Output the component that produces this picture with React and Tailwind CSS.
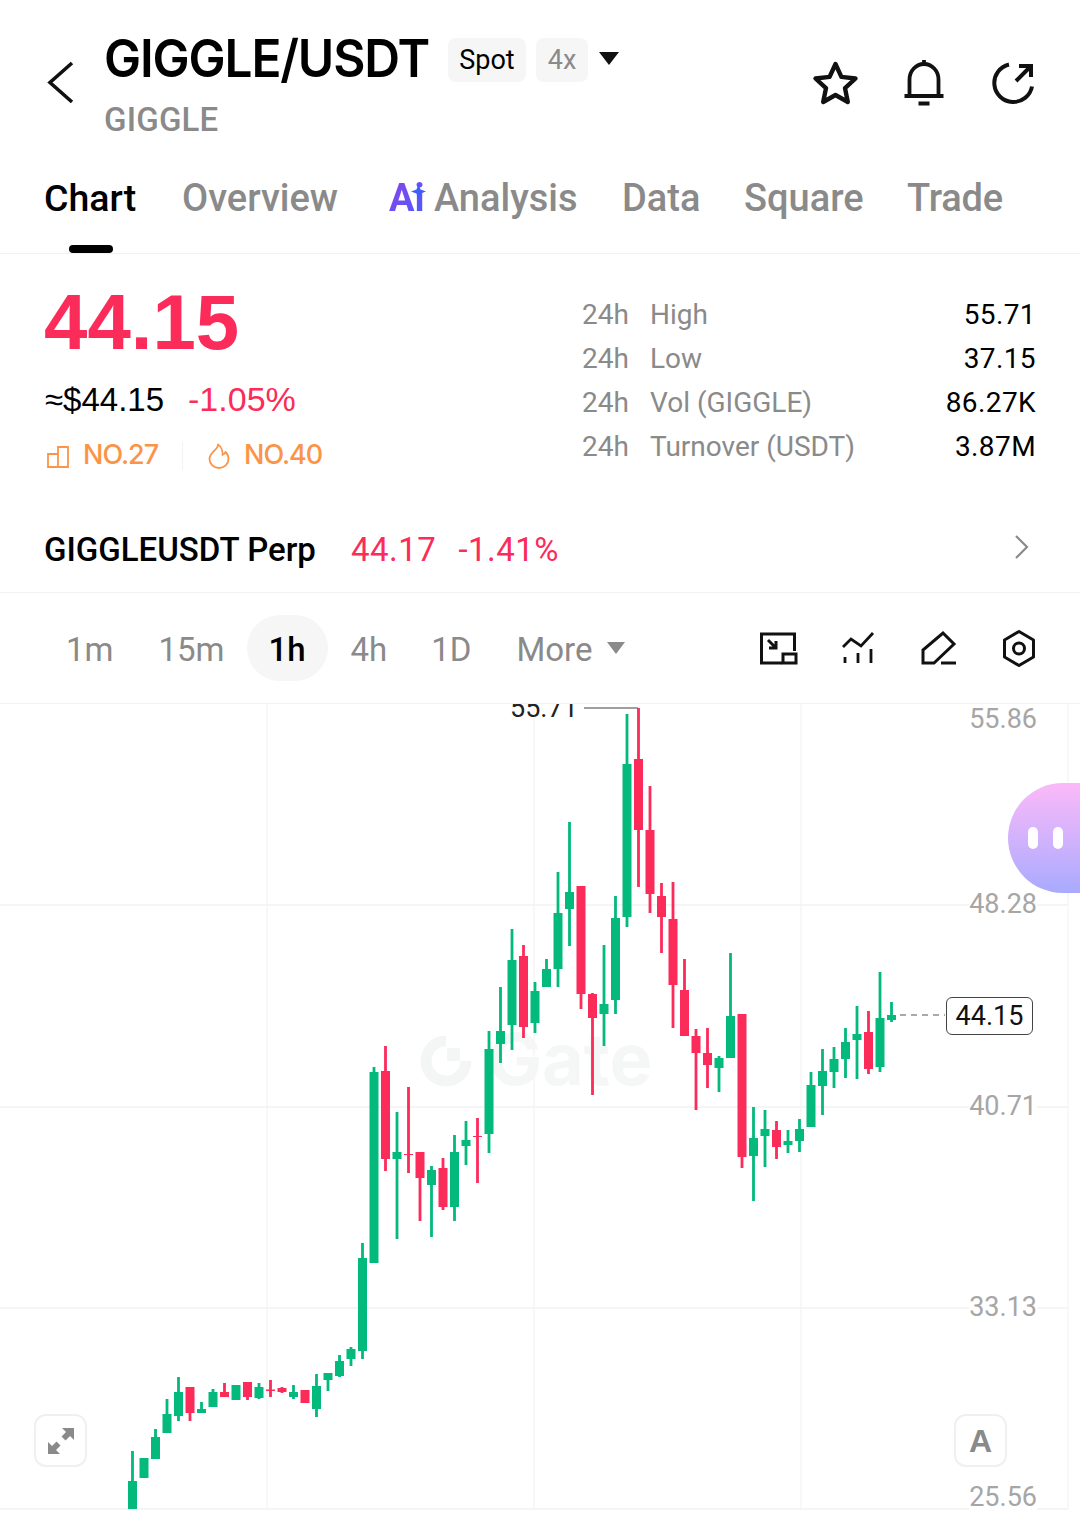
const RED = '#fb2b5a'
const GREEN = '#04b97c'

// [high, bodyTop, bodyBottom, low, up?] page y coordinates, one every 11.5px from x=132.5
const candles = [
  [1451, 1481, 1509, 1509, 1], [1458, 1458, 1478, 1478, 1], [1429, 1437, 1459, 1459, 1], [1399, 1414, 1433, 1433, 1],
  [1377, 1392, 1416, 1421, 1], [1387, 1387, 1413, 1421, 0], [1402, 1409, 1413, 1413, 1], [1389, 1392, 1407, 1407, 1],
  [1383, 1392, 1397, 1397, 0], [1385, 1385, 1400, 1400, 1], [1382, 1382, 1397, 1400, 0], [1383, 1387, 1398, 1399, 1],
  [1380, 1389.5, 1391, 1397, 0], [1387, 1388, 1392, 1393, 0], [1385, 1392, 1397, 1399, 1], [1390, 1390, 1403, 1403, 0],
  [1374, 1386, 1409, 1417, 1], [1373, 1373, 1380, 1391, 1], [1355, 1361, 1376, 1377, 1], [1347, 1349, 1359, 1366, 1],
  [1243, 1258, 1351, 1359, 1], [1067, 1072, 1263, 1263, 1], [1046, 1071, 1159, 1171, 0], [1112, 1152, 1159, 1239, 1],
  [1087, 1154, 1155, 1173, 0], [1152, 1152, 1178, 1221, 0], [1166, 1170, 1185, 1237, 1], [1158, 1168, 1207, 1210, 0],
  [1135, 1152, 1207, 1221, 1], [1121, 1140, 1146, 1165, 1], [1118, 1136, 1137, 1183, 0], [1031, 1049, 1134, 1153, 1],
  [987, 1031, 1044, 1063, 1], [929, 960, 1025, 1050, 1], [945, 956, 1027, 1038, 0], [982, 991, 1023, 1033, 1],
  [959, 969, 987, 987, 1], [872, 913, 969, 987, 1], [822, 892, 909, 946, 1], [886, 886, 994, 1009, 0],
  [993, 994, 1018, 1095, 0], [945, 1004, 1014, 1046, 1], [896, 918, 1000, 1014, 1], [714, 764, 917, 927, 1],
  [708, 759, 830, 887, 0], [786, 830, 894, 913, 0], [883, 896, 917, 953, 0], [882, 919, 985, 1028, 0],
  [959, 990, 1036, 1036, 0], [1029, 1036, 1053, 1110, 0], [1028, 1053, 1065, 1088, 0], [1056, 1058, 1068, 1092, 1],
  [953, 1016, 1058, 1058, 1], [1014, 1014, 1157, 1168, 0], [1107, 1138, 1156, 1201, 1], [1110, 1129, 1136, 1167, 1],
  [1121, 1130, 1147, 1159, 0], [1130, 1141, 1145, 1153, 1], [1119, 1129, 1141, 1152, 1], [1072, 1085, 1127, 1127, 1],
  [1049, 1071, 1086, 1115, 1], [1047, 1059, 1072, 1088, 1], [1028, 1042, 1059, 1078, 1], [1006, 1034, 1040, 1079, 1],
  [1011, 1032, 1069, 1074, 0], [972, 1018, 1067, 1072, 1], [1002, 1015, 1020, 1022, 1],
]

function CandleChart() {
  return (
    <svg className="absolute left-0 top-0" width="1080" height="809" viewBox="0 704 1080 809">
      {[905, 1107, 1308, 1509].map(y => <line key={y} x1="0" x2="1068" y1={y} y2={y} stroke="#f2f2f2" strokeWidth="1.5" />)}
      {[267, 534, 801, 1068].map(x => <line key={x} x1={x} x2={x} y1="704" y2="1509" stroke="#f3f3f3" strokeWidth="1.2" />)}
      {/* watermark logo */}
      <path d="M446 1041A20 20 0 1 0 466 1061" fill="none" stroke="#f4f5f5" strokeWidth="11" />
      <rect x="447" y="1048" width="13" height="13" fill="#f4f5f5" />
      <text x="488" y="1085" fontFamily="Inter, sans-serif" fontWeight="700" fontSize="72" fill="#f5f6f6">Gate</text>
      <line x1="584" x2="638" y1="708" y2="708" stroke="#808080" strokeWidth="1.6" />
      <line x1="900" x2="945" y1="1015" y2="1015" stroke="#555" strokeWidth="1.2" strokeDasharray="6 5" />
      {candles.map(([high, top, bottom, low, up], i) => {
        const x = 132.5 + i * 11.5
        const color = up ? GREEN : RED
        return (
          <g key={i} fill={color}>
            <rect x={x - 1.4} y={high} width="2.8" height={low - high} />
            <rect x={x - 4.5} y={top} width="9" height={Math.max(bottom - top, 1)} />
          </g>
        )
      })}
    </svg>
  )
}

function AxisLabel({ value, top }) {
  return <div className={`absolute right-[43px] ${top} bg-white text-[27px] leading-[28px] text-[#a6a6a6]`}>{value}</div>
}

export default function App() {
  return (
    <div className="w-[1080px] h-[1513px] overflow-hidden bg-white text-black font-['Roboto',sans-serif]">
      {/* Header */}
      <div className="h-[160px] flex justify-between pr-[43px]">
        <div className="flex">
          <svg className="ml-[45px] mt-[60px]" width="30" height="44" viewBox="0 0 30 44" fill="none" stroke="#111" strokeWidth="3.6">
            <path d="M27 3 5 22.500 27 42" />
          </svg>
          <div className="ml-[29px] pt-[30px]">
            <div className="flex items-center h-[58px]">
              <span className="text-[52px] leading-[58px] font-semibold tracking-[-1.2px] font-['Inter',sans-serif] scale-x-[0.953] origin-left w-[323px] whitespace-nowrap">GIGGLE/USDT</span>
              <span className="ml-[21px] mt-[2px] h-[44px] w-[78px] rounded-lg bg-[#f6f6f6] flex items-center justify-center text-[27px]">Spot</span>
              <span className="ml-[10px] mt-[2px] h-[44px] w-[52px] rounded-lg bg-[#f6f6f6] flex items-center justify-center text-[27px] text-[#8a8a8a]">4x</span>
              <span className="ml-[11px] w-0 h-0 border-x-[10px] border-x-transparent border-t-[13px] border-t-[#111] -mt-[2px]" />
            </div>
            <div className="mt-[13px] text-[33px] leading-[38px] font-medium text-[#8a8a8a] tracking-[0.2px]">GIGGLE</div>
          </div>
        </div>
        <div className="flex items-start gap-[41px] pt-[59px]">
          <svg width="48" height="48" viewBox="0 0 48 48" fill="none" stroke="#111" strokeWidth="4.400" strokeLinejoin="round">
            <path d="M24.500 5 30.400 17.900 44.500 19.500 34 29.100 36.800 43 24.500 36 12.200 43 15 29.100 4.500 19.500 18.600 17.900Z" />
          </svg>
          <svg width="48" height="48" viewBox="0 0 48 48" fill="none" stroke="#111" strokeWidth="3.8">
            <path d="M9.500 37V20.500a14.500 15.500 0 0 1 29 0V37" />
            <path d="M4.500 37h39M24 1v4M18.500 44.500h11" />
          </svg>
          <svg width="48" height="48" viewBox="0 0 48 48" fill="none" stroke="#111" strokeWidth="4">
            <path d="M20 5.500A19 19 0 1 0 43 27.500" />
            <path d="M27 22 42 7M30 7h12v11" />
          </svg>
        </div>
      </div>

      {/* Tabs */}
      <div className="h-[94px] border-b border-[#f2f2f2] flex pl-[44px] text-[38px] font-medium text-[#8a8a8a]">
        <div className="relative h-full text-black w-[138px]">
          <span className="leading-[76px] text-[37.500px]">Chart</span>
          <span className="absolute left-[25px] bottom-0 w-[44px] h-[8px] rounded-full bg-black" />
        </div>
        <span className="leading-[76px] w-[206px]">Overview</span>
        <span className="flex w-[234px] leading-[76px]">
          <span className="relative font-bold w-[46px] pl-[1px]">
            <span className="bg-gradient-to-br from-[#8b3fe8] to-[#3d5cff] bg-clip-text text-transparent">Ai</span>
            <svg className="absolute left-[23px] top-[24px]" width="15" height="15" viewBox="0 0 15 15"><path d="M7.500 0 9.500 5.500 15 7.500 9.500 9.500 7.500 15 5.500 9.500 0 7.500 5.500 5.500Z" fill="#3d5cff" /></svg>
          </span>
          Analysis
        </span>
        <span className="leading-[76px] w-[122px]">Data</span>
        <span className="leading-[76px] w-[163px]">Square</span>
        <span className="leading-[76px] tracking-[-0.2px]">Trade</span>
      </div>

      {/* Price stats */}
      <div className="h-[246px] flex justify-between pl-[45px] pr-[44px]">
        <div>
          <div className="pt-[26px] h-[120px] -ml-[1px] text-[78px] leading-[84px] font-bold text-[#fb2b5a] font-['Liberation_Sans',sans-serif]">44.15</div>
          <div className="flex items-center h-[50px] pt-[1px] text-[34px] font-['Liberation_Sans',sans-serif]">
            <span className="text-[33px]">≈$44.15</span>
            <span className="ml-[24px] text-[#fb2b5a]">-1.05%</span>
          </div>
          <div className="flex items-center h-[62px] pt-[1px] text-[27px] font-medium text-[#fb9447] font-['Inter',sans-serif] tracking-[-1px]">
            <svg width="24" height="24" viewBox="0 0 24 24" fill="none" stroke="#fb9447" strokeWidth="1.8">
              <path d="M3 10h10v13H3zM13 3h10v20H13z" />
            </svg>
            <span className="ml-[14px] w-[99px]">NO.27</span>
            <span className="w-px h-[28px] bg-[#f2f2f2]" />
            <svg className="ml-[24px]" width="24" height="26" viewBox="0 0 24 26" fill="none" stroke="#fb9447" strokeWidth="1.800" strokeLinejoin="round">
              <path d="M11 1.500c1 4.500-8.500 7.500-8.500 14.500a9.500 9 0 0 0 19 0c0-3-1.500-5.500-3-7-.5 1.500-1.500 2.500-3 3 .5-4-1.500-8.500-4.500-10.500Z" />
            </svg>
            <span className="ml-[13px]">NO.40</span>
          </div>
        </div>
        <div className="w-[454px] pt-[39px] text-[28px] leading-[44px]">
          {[['High', '55.71'], ['Low', '37.15'], ['Vol (GIGGLE)', '86.27K'], ['Turnover (USDT)', '3.87M']].map(([label, value]) => (
            <div key={label} className="flex">
              <span className="w-[68px] text-[#8a8a8a]">24h</span>
              <span className="flex-1 text-[#8a8a8a]">{label}</span>
              <span className="tracking-[0.4px]">{value}</span>
            </div>
          ))}
        </div>
      </div>

      {/* Perp row */}
      <div className="h-[93px] border-b border-[#f2f2f2] flex items-start pl-[44px] pr-[50px] pt-[30px] text-[33px] leading-[40px]">
        <span className="font-medium w-[307px] whitespace-nowrap">GIGGLEUSDT Perp</span>
        <span className="text-[#fb2b5a] tracking-[0.5px]">44.17</span>
        <span className="ml-[22px] text-[#fb2b5a] tracking-[0.5px]">-1.41%</span>
        <svg className="ml-auto mt-[4px]" width="16" height="26" viewBox="0 0 16 26" fill="none" stroke="#8a8a8a" strokeWidth="2.2"><path d="M2 2l11 11L2 24" /></svg>
      </div>

      {/* Intervals */}
      <div className="h-[111px] border-b border-[#f2f2f2] flex items-center justify-between pl-[44px] pr-[41px] text-[33px] text-[#8a8a8a]">
        <div className="flex items-center">
          <span className="pl-[22px] pr-[23px] pt-[4px]">1m</span>
          <span className="px-[22px] pt-[4px]">15m</span>
          <span className="w-[81px] text-center h-[66px] leading-[70px] rounded-full bg-[#f6f6f6] text-black font-medium">1h</span>
          <span className="pl-[23px] pr-[22px] pt-[4px]">4h</span>
          <span className="px-[22px] pt-[4px]">1D</span>
          <span className="pl-[23px] pt-[4px]">More</span>
          <span className="ml-[14px] w-0 h-0 border-x-[9px] border-x-transparent border-t-[12px] border-t-[#8a8a8a]" />
        </div>
        <div className="flex items-center gap-[40px] text-[#111]">
          <svg width="40" height="40" viewBox="0 0 40 40" fill="none" stroke="#111" strokeWidth="3">
            <path d="M23 35H2.500V6h33v17" />
            <path d="M24 26h13v9H24zM9 12l8 8M10 20h7v-7" />
          </svg>
          <svg width="40" height="40" viewBox="0 0 40 40" fill="none" stroke="#111" strokeWidth="2.8">
            <path d="M4 19l8-8 10 7L34 5" />
            <path d="M6 29v6M19 25v10M32 21v14" />
          </svg>
          <svg width="40" height="40" viewBox="0 0 40 40" fill="none" stroke="#111" strokeWidth="3">
            <path d="M24 5 35 16 15 35H4V22Z" />
            <path d="M22 35h15" />
          </svg>
          <svg width="40" height="40" viewBox="0 0 40 40" fill="none" stroke="#111" strokeWidth="3">
            <path d="M20 3.500 34.500 12v17L20 37.500 5.500 29V12Z" strokeLinejoin="round" />
            <circle cx="20" cy="20.500" r="5.500" />
          </svg>
        </div>
      </div>

      {/* Chart */}
      <div className="relative h-[809px] overflow-hidden">
        <CandleChart />
        <div className="absolute left-[510px] -top-[12px] text-[27px] leading-[32px] text-[#222]">55.71</div>
        <AxisLabel value="55.86" top="top-[1px]" />
        <AxisLabel value="48.28" top="top-[186px]" />
        <AxisLabel value="40.71" top="top-[388px]" />
        <AxisLabel value="33.13" top="top-[589px]" />
        <AxisLabel value="25.56" top="top-[779px]" />
        <div className="absolute left-[946px] top-[293px] w-[87px] h-[38px] rounded-md border border-[#444] bg-white flex items-center justify-center text-[27px] text-[#111]">44.15</div>
        {/* floating assistant */}
        <div className="absolute right-0 top-[79px] w-[72px] h-[110px] rounded-l-[55px] bg-gradient-to-b from-[#fbb9f8] to-[#a8aaff] flex items-center gap-[15px] pl-[20px]">
          <span className="w-[10px] h-[22px] rounded-full bg-white" />
          <span className="w-[10px] h-[22px] rounded-full bg-white" />
        </div>
        <button className="absolute left-[34px] top-[710px] w-[53px] h-[53px] rounded-xl border-[2.500px] border-[#f0f0f0] bg-white flex items-center justify-center">
          <svg width="28" height="28" viewBox="0 0 28 28" fill="#8a8a8a">
            <path d="M15 1h12v12l-4-4-4.500 4.500-4-4L19 5zM1 27V15l4 4 4.500-4.500 4 4L9 23l4 4z" />
          </svg>
        </button>
        <button className="absolute left-[954px] top-[710px] w-[53px] h-[53px] rounded-xl border-[2.500px] border-[#f0f0f0] bg-white flex items-center justify-center text-[32px] font-bold text-[#8a8a8a] font-['Liberation_Sans',sans-serif]">A</button>
      </div>
    </div>
  )
}
